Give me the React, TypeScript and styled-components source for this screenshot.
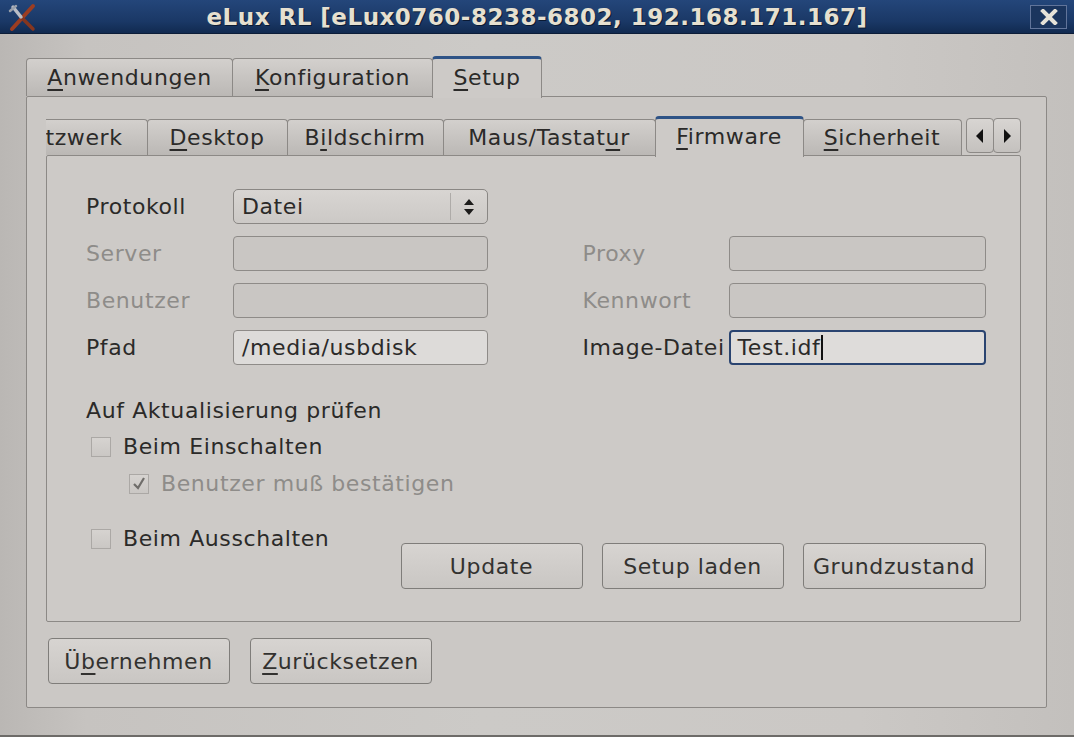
import React from "react";
import styled, { createGlobalStyle, css } from "styled-components";

const GlobalStyle = createGlobalStyle`
  html, body { margin: 0; padding: 0; }
  body {
    background: #c7c4c1;
    font-family: "DejaVu Sans", "Liberation Sans", sans-serif;
    overflow: hidden;
  }
`;

const Window = styled.div`
  width: 1074px;
  height: 737px;
  box-sizing: border-box;
  display: flex;
  flex-direction: column;
  color: #2b2a29;
  font-size: 22px;
  letter-spacing: 0.6px;
  border-bottom: 2px solid #6d6b68;
  background: linear-gradient(90deg, #bab7b4 0%, #c6c3c0 8%, #cccac7 45%, #cbc8c5 80%, #c3c0bd 100%);
`;

const TitleBar = styled.div`
  flex: none;
  height: 33px;
  display: grid;
  grid-template-columns: 60px 1fr 60px;
  align-items: center;
  background: linear-gradient(#24467a, #1a3866 65%, #112a50);
  border-bottom: 1px solid #0c1d38;
`;

const TitleText = styled.div`
  text-align: center;
  font-weight: bold;
  font-size: 23px;
  letter-spacing: 0.5px;
  color: #e6e0d0;
  text-shadow: 1px 1px 0 #0a1a33;
  white-space: nowrap;
`;

const CloseBox = styled.div`
  justify-self: end;
  margin-right: 7px;
  width: 37px;
  height: 24px;
  box-sizing: border-box;
  border: 1px solid #61749a;
  background: #1b355e;
  display: flex;
  align-items: center;
  justify-content: center;
`;

const Body = styled.div`
  flex: 1;
  padding: 22px 27px 0 26px;
  display: flex;
  flex-direction: column;
`;

const TabBar = styled.div`
  display: flex;
  align-items: flex-end;
  margin-bottom: -2px;
  position: relative;
  z-index: 1;
`;

const Tab = styled.div<{ $w: number; $active?: boolean; $h: number; $clip?: boolean }>`
  width: ${(p) => p.$w}px;
  height: ${(p) => p.$h}px;
  flex: none;
  box-sizing: border-box;
  display: flex;
  align-items: center;
  justify-content: center;
  margin-bottom: 2px;
  margin-right: -1px;
  border: 1.5px solid #8c8986;
  border-bottom: none;
  border-radius: 4px 4px 0 0;
  background: linear-gradient(#d3d0cd, #bbb8b5);
  white-space: nowrap;
  overflow: hidden;
  ${(p) =>
    p.$active &&
    css`
      height: ${p.$h + 4}px;
      margin-bottom: 0;
      padding-bottom: 3px;
      background: #cdcac7;
      border-top: 3px solid #2e5386;
      position: relative;
      z-index: 2;
    `}
  ${(p) =>
    p.$clip &&
    css`
      justify-content: flex-start;
      padding-left: 0;
      border-left: none;
      border-radius: 0 4px 0 0;
    `}
`;

const U = styled.span`
  text-decoration: underline;
  text-underline-offset: 4px;
  text-decoration-thickness: 1.5px;
`;

const Pane = styled.div<{ $h: number }>`
  height: ${(p) => p.$h}px;
  box-sizing: border-box;
  border: 1.5px solid #8c8986;
  border-radius: 2px;
  background: #cbc8c5;
`;

const OuterPane = styled(Pane)`
  padding: 18px 25px 0 18.5px;
  display: flex;
  flex-direction: column;
`;

const InnerTabRow = styled.div`
  display: flex;
  align-items: flex-end;
  margin-bottom: -2px;
  position: relative;
  z-index: 1;
`;

const TabScroller = styled.div`
  flex: 1;
  display: flex;
  align-items: flex-end;
  overflow: hidden;
  height: 42px;
`;

const ArrowButtons = styled.div`
  display: flex;
  margin-bottom: 4px;
`;

const ArrowButton = styled.div`
  width: 28px;
  height: 35px;
  box-sizing: border-box;
  border: 1.5px solid #8c8986;
  border-radius: 4px;
  background: linear-gradient(#d8d5d2, #c4c1be);
  display: flex;
  align-items: center;
  justify-content: center;
  margin-left: -1px;
`;

const InnerPane = styled(Pane)`
  padding: 33px 34.5px 0 39.5px;
  display: flex;
  flex-direction: column;
  background: #cdcac7;
`;

const FormGrid = styled.div`
  display: grid;
  grid-template-columns: 147px 255px 1fr 146px 257px;
  grid-auto-rows: 35px;
  row-gap: 12px;
  align-items: center;
`;

const Label = styled.div<{ $col: number; $disabled?: boolean }>`
  grid-column: ${(p) => p.$col};
  color: ${(p) => (p.$disabled ? "#8e8c89" : "#2b2a29")};
  white-space: nowrap;
`;

const Field = styled.div<{ $col: number; $state: "disabled" | "enabled" | "focused" }>`
  grid-column: ${(p) => p.$col};
  height: 35px;
  box-sizing: border-box;
  border-radius: 4px;
  display: flex;
  align-items: center;
  padding-left: 8px;
  border: 1.5px solid #8e8b88;
  background: #c9c6c3;
  ${(p) =>
    p.$state === "enabled" &&
    css`
      background: #dddbd9;
    `}
  ${(p) =>
    p.$state === "focused" &&
    css`
      background: #dedcda;
      border: 2px solid #2a4470;
      padding-left: 7px;
    `}
`;

const Caret = styled.span`
  display: inline-block;
  width: 1.5px;
  height: 25px;
  background: #111;
  margin-left: 1px;
  vertical-align: middle;
`;

const Combo = styled.div`
  grid-column: 2;
  height: 35px;
  box-sizing: border-box;
  border: 1.5px solid #8a8784;
  border-radius: 5px;
  background: linear-gradient(#d8d5d2, #ccc9c6);
  display: flex;
  align-items: stretch;
`;

const ComboText = styled.div`
  flex: 1;
  display: flex;
  align-items: center;
  padding-left: 8px;
`;

const ComboArrows = styled.div`
  width: 36px;
  border-left: 1px solid #aeaba8;
  margin: 3px 0;
  display: flex;
  align-items: center;
  justify-content: center;
`;

const Section = styled.div`
  margin-top: 33px;
  display: flex;
  flex-direction: column;
`;

const SectionTitle = styled.div`
  line-height: 26px;
`;

const CheckRow = styled.div<{ $indent?: boolean; $disabled?: boolean; $gap: number }>`
  display: flex;
  align-items: center;
  line-height: 26px;
  margin-top: ${(p) => p.$gap}px;
  margin-left: ${(p) => (p.$indent ? 43 : 5)}px;
  color: ${(p) => (p.$disabled ? "#8e8c89" : "#2b2a29")};
`;

const Box = styled.div`
  width: 20px;
  height: 20px;
  box-sizing: border-box;
  border: 1px solid #aba8a5;
  background: linear-gradient(#d6d3d0, #cac7c4);
  margin-right: 12px;
  display: flex;
  align-items: center;
  justify-content: center;
  flex: none;
`;

const BottomRow = styled.div`
  display: flex;
  justify-content: space-between;
  align-items: flex-start;
`;

const ButtonGroup = styled.div<{ $gap: number; $top?: number }>`
  display: flex;
  gap: ${(p) => p.$gap}px;
  margin-top: ${(p) => p.$top ?? 0}px;
`;

const Button = styled.div<{ $w: number }>`
  width: ${(p) => p.$w}px;
  height: 46px;
  box-sizing: border-box;
  border: 1.5px solid #7f7d7a;
  border-radius: 4px;
  background: linear-gradient(#d7d4d1, #c9c6c3);
  display: flex;
  align-items: center;
  justify-content: center;
  color: #333230;
  white-space: nowrap;
`;

const Footer = styled.div`
  margin: 16px 0 0 2px;
`;

const AppIcon = () => (
  <svg width="34" height="30" viewBox="0 0 34 30" style={{ marginLeft: 4 }}>
    <path d="M29 4 L8 27" stroke="#9b3d22" strokeWidth="4" strokeLinecap="round" />
    <path d="M17 15 L29 27" stroke="#86361f" strokeWidth="3.5" strokeLinecap="round" />
    <path d="M9 5 L17 15" stroke="#b9bdc6" strokeWidth="3.5" strokeLinecap="round" />
    <path d="M6 9 L12 4" stroke="#9aa0ab" strokeWidth="2.5" strokeLinecap="round" />
  </svg>
);

const CloseIcon = () => (
  <svg width="18" height="16" viewBox="0 0 18 16">
    <path d="M3 2 L15 14 M15 2 L3 14" stroke="#e6e2d8" strokeWidth="4" strokeLinecap="square" />
  </svg>
);

const Triangle = ({ dir }: { dir: "left" | "right" }) => (
  <svg width="10" height="16" viewBox="0 0 10 16">
    <path d={dir === "left" ? "M8 1 L1 8 L8 15 Z" : "M2 1 L9 8 L2 15 Z"} fill="#111" />
  </svg>
);

const UpDown = () => (
  <svg width="12" height="20" viewBox="0 0 12 20">
    <path d="M1 8 L6 2 L11 8 Z M1 12 L6 18 L11 12 Z" fill="#1d1c1b" />
  </svg>
);

const Check = () => (
  <svg width="16" height="16" viewBox="0 0 16 16">
    <path d="M3 8 L7 12 L13 2" stroke="#6f6d6a" strokeWidth="2.2" fill="none" />
  </svg>
);

export default function App() {
  return (
    <>
      <GlobalStyle />
      <Window>
        <TitleBar>
          <AppIcon />
          <TitleText>eLux RL [eLux0760-8238-6802, 192.168.171.167]</TitleText>
          <CloseBox>
            <CloseIcon />
          </CloseBox>
        </TitleBar>

        <Body>
          <TabBar>
            <Tab $w={207} $h={38}>
              <span><U>A</U>nwendungen</span>
            </Tab>
            <Tab $w={201} $h={38}>
              <span><U>K</U>onfiguration</span>
            </Tab>
            <Tab $w={110} $h={38} $active>
              <span><U>S</U>etup</span>
            </Tab>
          </TabBar>

          <OuterPane $h={612}>
            <InnerTabRow>
              <TabScroller>
                {/* the strip is scrolled: only the tail of "Netzwerk" shows */}
                <Tab $w={102} $h={36} $clip>tzwerk</Tab>
                <Tab $w={141} $h={36}>
                  <span><U>D</U>esktop</span>
                </Tab>
                <Tab $w={157} $h={36}>
                  <span>B<U>i</U>ldschirm</span>
                </Tab>
                <Tab $w={213} $h={36}>
                  <span>Maus/Tastat<U>u</U>r</span>
                </Tab>
                <Tab $w={149} $h={37} $active>
                  <span><U>F</U>irmware</span>
                </Tab>
                <Tab $w={159} $h={36}>
                  <span><U>S</U>icherheit</span>
                </Tab>
              </TabScroller>
              <ArrowButtons>
                <ArrowButton>
                  <Triangle dir="left" />
                </ArrowButton>
                <ArrowButton>
                  <Triangle dir="right" />
                </ArrowButton>
              </ArrowButtons>
            </InnerTabRow>

            <InnerPane $h={467}>
              <FormGrid>
                <Label $col={1}>Protokoll</Label>
                <Combo>
                  <ComboText>Datei</ComboText>
                  <ComboArrows>
                    <UpDown />
                  </ComboArrows>
                </Combo>

                <Label $col={1} $disabled>Server</Label>
                <Field $col={2} $state="disabled" />
                <Label $col={4} $disabled>Proxy</Label>
                <Field $col={5} $state="disabled" />

                <Label $col={1} $disabled>Benutzer</Label>
                <Field $col={2} $state="disabled" />
                <Label $col={4} $disabled>Kennwort</Label>
                <Field $col={5} $state="disabled" />

                <Label $col={1}>Pfad</Label>
                <Field $col={2} $state="enabled">/media/usbdisk</Field>
                <Label $col={4}>Image-Datei</Label>
                <Field $col={5} $state="focused">
                  Test.idf<Caret />
                </Field>
              </FormGrid>

              <Section>
                <SectionTitle>Auf Aktualisierung prüfen</SectionTitle>
                <CheckRow $gap={10}>
                  <Box />
                  Beim Einschalten
                </CheckRow>
                <CheckRow $gap={11} $indent $disabled>
                  <Box>
                    <Check />
                  </Box>
                  Benutzer muß bestätigen
                </CheckRow>
                <BottomRow>
                  <CheckRow $gap={29}>
                    <Box />
                    Beim Ausschalten
                  </CheckRow>
                  <ButtonGroup $gap={19} $top={46}>
                    <Button $w={182}>Update</Button>
                    <Button $w={182}>Setup laden</Button>
                    <Button $w={183}>Grundzustand</Button>
                  </ButtonGroup>
                </BottomRow>
              </Section>
            </InnerPane>

            <Footer>
              <ButtonGroup $gap={20}>
                <Button $w={182}>
                  <span>Ü<U>b</U>ernehmen</span>
                </Button>
                <Button $w={182}>
                  <span><U>Z</U>urücksetzen</span>
                </Button>
              </ButtonGroup>
            </Footer>
          </OuterPane>
        </Body>
      </Window>
    </>
  );
}
